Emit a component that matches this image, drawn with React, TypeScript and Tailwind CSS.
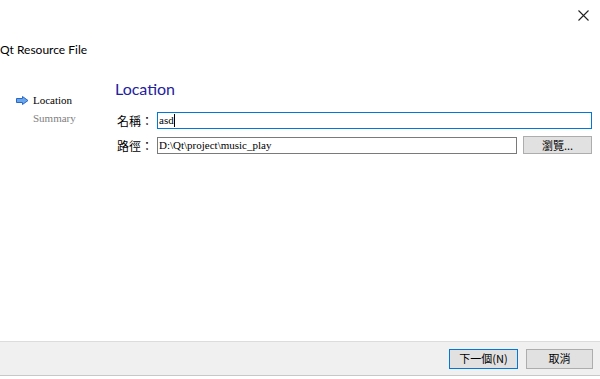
import React from "react";

const ui = { fontFamily: 'Lato, "Noto Sans", "Noto Sans CJK TC", sans-serif' };
const cjk = { fontFamily: '"Noto Sans CJK TC", "Noto Sans", sans-serif' };
const serif = { fontFamily: '"Liberation Serif", "Noto Sans CJK TC", serif' };

export default function App() {
  return (
    <div className="w-[600px] h-[379px] bg-white flex flex-col overflow-hidden text-black">
      {/* header */}
      <div className="h-[70px] flex flex-col">
        <div className="h-[28px] flex justify-end items-center pr-[11px] pt-[2px]">
          <svg width="11" height="11" viewBox="0 0 11 11">
            <path d="M0.5 0.5 L10.5 10.5 M10.5 0.5 L0.5 10.5" stroke="#222" strokeWidth="1.1" />
          </svg>
        </div>
        <div className="ml-0 mt-[14px] text-[12px] leading-[16px]" style={ui}>
          Qt Resource File
        </div>
      </div>

      {/* body */}
      <div className="flex-1 flex">
        <div className="w-[115px] pt-[22px] pl-[16px]">
          <div className="flex items-center h-[16px]">
            <svg width="13" height="9" viewBox="0 0 13 9" className="mr-[4px]">
              <path d="M0.5 2.5 H6.5 V0.5 L12 4.5 L6.5 8.5 V6.5 H0.5 Z" fill="#6aa6ea" stroke="#2a66c8" strokeWidth="1" strokeLinejoin="round" />
            </svg>
            <span className="text-[11px] leading-[16px] font-normal" style={serif}>Location</span>
          </div>
          <div className="pl-[17px] mt-[2px] text-[11px] leading-[16px] font-normal text-[#808080]" style={serif}>
            Summary
          </div>
        </div>
        <div className="flex-1 pt-[9px] pr-[8px]">
          <div className="text-[16px] leading-[20px] text-[#1e22a0]" style={ui}>Location</div>
          <div className="mt-[13px] flex items-center">
            <div className="w-[42px] pl-[2px] text-[12px] leading-[17px]" style={cjk}>名稱：</div>
            <div className="flex-1 h-[17px] border border-[#0078d7] flex items-center px-[1px] text-[11px]" style={serif}>
              asd<span className="inline-block w-px h-[13px] bg-black" />
            </div>
          </div>
          <div className="mt-[7px] flex items-center">
            <div className="w-[42px] pl-[2px] text-[12px] leading-[17px]" style={cjk}>路徑：</div>
            <div className="flex-1 h-[17px] border border-[#7a7a7a] flex items-center px-[1px] text-[11px]" style={serif}>
              D:\Qt\project\music_play
            </div>
            <div className="ml-[6px] w-[69px] h-[18px] border border-[#adadad] bg-[#e1e1e1] flex items-center justify-center text-[11px]" style={cjk}>
              瀏覽...
            </div>
          </div>
        </div>
      </div>

      {/* footer */}
      <div className="h-[35px] bg-[#f0f0f0] border-t border-[#dcdcdc] border-b border-b-[#c8c8c8] flex items-center justify-end pr-[7px] gap-[8px]">
        <div className="w-[69px] h-[20px] border border-[#0078d7] bg-[#e1e1e1] flex items-center justify-center text-[11px]" style={cjk}>
          下一個(N)
        </div>
        <div className="w-[67px] h-[20px] border border-[#adadad] bg-[#e1e1e1] flex items-center justify-center text-[11px]" style={cjk}>
          取消
        </div>
      </div>
      <div className="h-[3px] bg-white" />
    </div>
  );
}
